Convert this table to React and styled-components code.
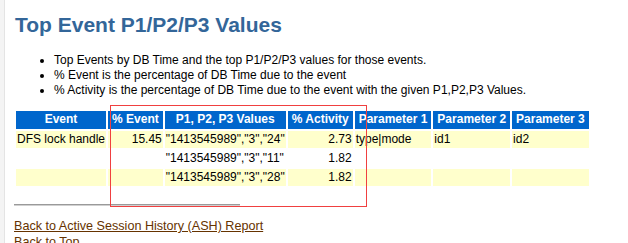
import React from 'react';
import styled, { createGlobalStyle } from 'styled-components';

const GlobalStyle = createGlobalStyle`
  html, body {
    margin: 0;
    padding: 0;
    background: #ffffff;
  }
  body {
    font-family: "Liberation Sans", Arial, Helvetica, sans-serif;
    font-size: 12px;
    color: #000000;
  }
`;

const Page = styled.div`
  position: relative;
  min-height: 243px;
  border-left: 4px solid #f4f4f4;
  box-shadow: inset 1px 0 0 #e4e4e4;
  padding: 13px 0 0 10px;
  box-sizing: border-box;
  overflow: hidden;
`;

const Title = styled.h2`
  margin: 0 0 0 1px;
  font: bold 21px "Liberation Sans", Arial, sans-serif;
  color: #336699;
`;

const Notes = styled.ul`
  margin: 16px 0 0;
  padding-left: 40px;
  font-size: 12px;
  line-height: 15px;
  list-style: disc;
`;

const Table = styled.table`
  margin-top: 11px;
  border-spacing: 2px;
  border-collapse: separate;
  font-size: 12px;
`;

const Th = styled.th`
  background: #0066cc;
  color: #ffffff;
  font-weight: bold;
  padding: 1px 4px 2px;
  line-height: 15px;
  text-align: center;
  white-space: nowrap;
`;

const Td = styled.td`
  background: ${p => (p.$shaded ? '#ffffcc' : '#ffffff')};
  text-align: ${p => (p.$num ? 'right' : 'left')};
  padding: 1px;
  line-height: 15px;
  white-space: nowrap;
  vertical-align: top;
`;

const Rule = styled.hr`
  margin: 16px 0 0;
  width: 226px;
  border: 0;
  border-top: 1px solid #9a9a9a;
  border-bottom: 1px solid #d0d0d0;
  height: 0;
`;

const Links = styled.div`
  margin-top: 12px;
  font-size: 12.6px;
  line-height: 16px;
  display: flex;
  flex-direction: column;
  align-items: flex-start;
`;

const Link = styled.a`
  color: #663300;
  text-decoration: underline;
`;

// highlight frame drawn over the middle columns
const Marker = styled.div`
  position: absolute;
  left: 106px;
  top: 105px;
  width: 255px;
  height: 100px;
  border: 1px solid #f04040;
  pointer-events: none;
`;

const rows = [
  { event: 'DFS lock handle', pct: '15.45', values: '"1413545989","3","24"', act: '2.73', p1: 'type|mode', p2: 'id1', p3: 'id2' },
  { event: '', pct: '', values: '"1413545989","3","11"', act: '1.82', p1: '', p2: '', p3: '' },
  { event: '', pct: '', values: '"1413545989","3","28"', act: '1.82', p1: '', p2: '', p3: '' },
];

export default function App() {
  return (
    <Page>
      <GlobalStyle />
      <Title>Top Event P1/P2/P3 Values</Title>
      <Notes>
        <li>Top Events by DB Time and the top P1/P2/P3 values for those events.</li>
        <li>% Event is the percentage of DB Time due to the event</li>
        <li>% Activity is the percentage of DB Time due to the event with the given P1,P2,P3 Values.</li>
      </Notes>
      <Table>
        <thead>
          <tr>
            <Th>Event</Th>
            <Th>% Event</Th>
            <Th>P1, P2, P3 Values</Th>
            <Th>% Activity</Th>
            <Th>Parameter 1</Th>
            <Th>Parameter 2</Th>
            <Th>Parameter 3</Th>
          </tr>
        </thead>
        <tbody>
          {rows.map((r, i) => {
            const shaded = i % 2 === 0;
            return (
              <tr key={i}>
                <Td $shaded={shaded}>{r.event}</Td>
                <Td $shaded={shaded} $num>{r.pct}</Td>
                <Td $shaded={shaded}>{r.values}</Td>
                <Td $shaded={shaded} $num>{r.act}</Td>
                <Td $shaded={shaded}>{r.p1}</Td>
                <Td $shaded={shaded}>{r.p2}</Td>
                <Td $shaded={shaded}>{r.p3}</Td>
              </tr>
            );
          })}
        </tbody>
      </Table>
      <Rule />
      <Links>
        <Link href="#ash">Back to Active Session History (ASH) Report</Link>
        <Link href="#top">Back to Top</Link>
      </Links>
      <Marker />
    </Page>
  );
}
